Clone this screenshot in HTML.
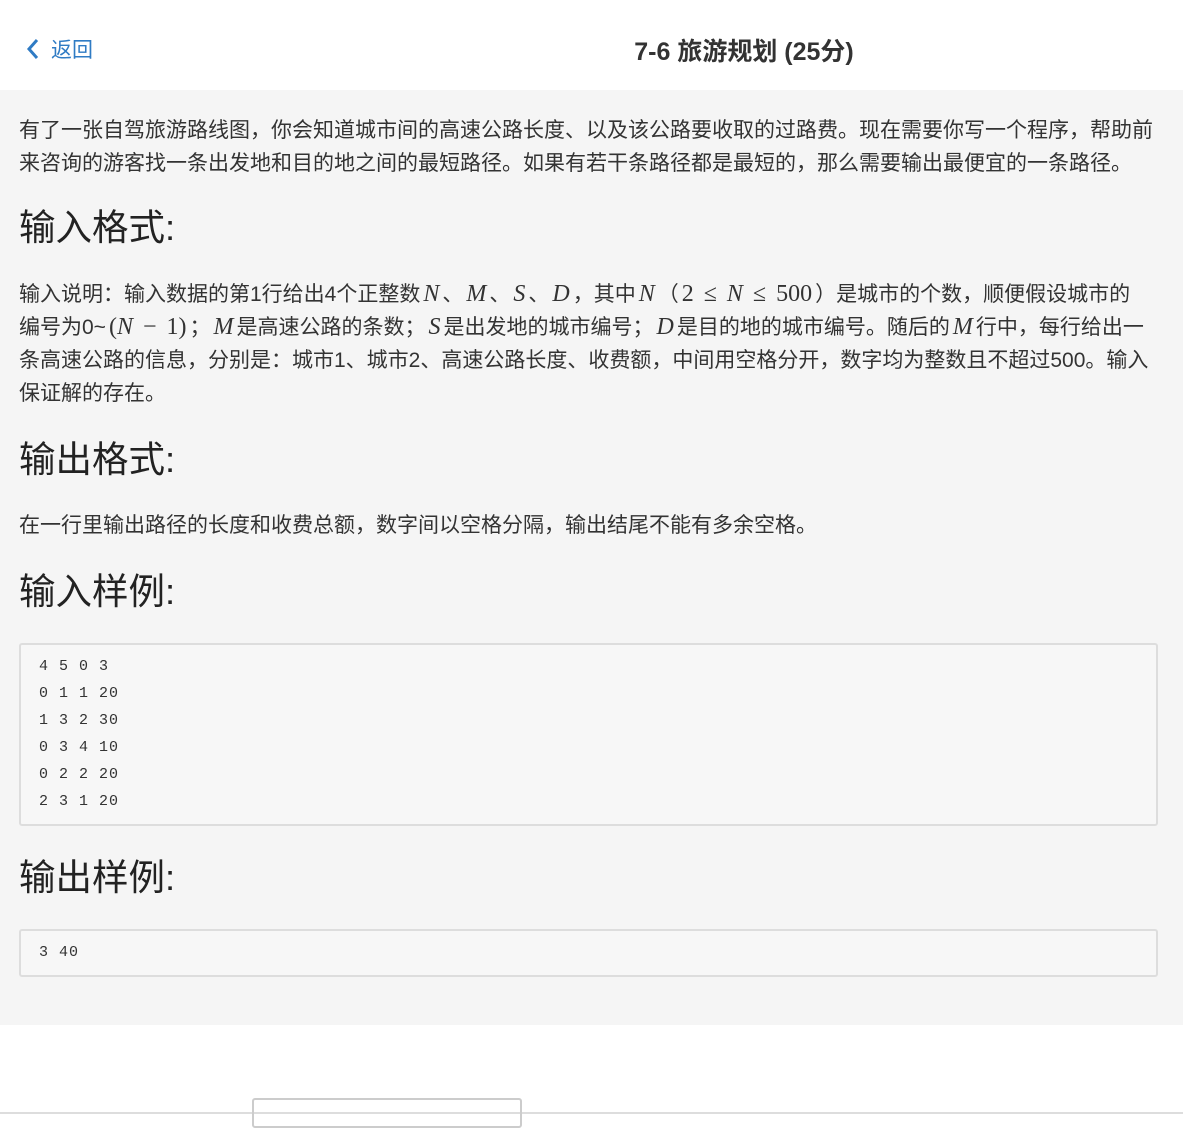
<!DOCTYPE html>
<html><head><meta charset="utf-8"><style>
*{margin:0;padding:0;box-sizing:border-box}
html,body{width:1183px;height:1118px;background:#fff;overflow:hidden;font-family:"Liberation Sans","Noto Sans CJK SC",sans-serif;color:#333}
.top{height:90px;position:relative;background:#fff}
.back{position:absolute;left:25px;top:34px;color:#2f7bc4;font-size:21px;display:flex;align-items:center}
.back svg{margin-right:10px}
.title{position:absolute;left:0;right:0;top:32px;text-align:center;padding-left:305px;font-size:25px;font-weight:bold;color:#333}
.main{position:absolute;top:90px;left:0;width:1183px;height:935px;background:#f5f5f5;padding:0 19px}
p{font-size:21px;line-height:33px;color:#333;white-space:nowrap}
h2{font-size:36.5px;font-weight:normal;color:#222;line-height:40px}
.m{font-family:"Liberation Serif",serif;font-size:24px;padding:0 3px}
.w{word-spacing:4px}
pre{font-family:"Liberation Mono",monospace;font-size:15px;letter-spacing:1px;line-height:27px;border:2px solid #ddd;border-radius:3px;background:#f7f7f7;padding:8px 18px;color:#333}
.bot{position:absolute;top:1098px;left:252px;width:270px;height:30px;border:2px solid #ccc;border-radius:3px}
.bl{position:absolute;top:1112px;left:0;width:1183px;height:2px;background:#ddd}
</style></head><body>
<div class="top">
<div class="back"><svg width="16" height="24" viewBox="0 0 16 24"><path d="M12 3 L4 12 L12 21" stroke="#2f7bc4" stroke-width="3" fill="none"/></svg>返回</div>
<div class="title">7-6 旅游规划 (25分)</div>
</div>
<div class="main">
<p style="position:absolute;top:24px;left:19px">有了一张自驾旅游路线图，你会知道城市间的高速公路长度、以及该公路要收取的过路费。现在需要你写一个程序，帮助前<br>来咨询的游客找一条出发地和目的地之间的最短路径。如果有若干条路径都是最短的，那么需要输出最便宜的一条路径。</p>
<h2 style="position:absolute;top:118px;left:19px">输入格式:</h2>
<p style="position:absolute;top:188px;left:19px">输入说明：输入数据的第1行给出4个正整数<i class="m">N</i>、<i class="m">M</i>、<i class="m">S</i>、<i class="m">D</i>，其中<i class="m">N</i>（<span class="m w">2 ≤ <i>N</i> ≤ 500</span>）是城市的个数，顺便假设城市的<br>编号为0~<span class="m w">(<i>N</i> − 1)</span>；<i class="m">M</i>是高速公路的条数；<i class="m">S</i>是出发地的城市编号；<i class="m">D</i>是目的地的城市编号。随后的<i class="m">M</i>行中，每行给出一<br>条高速公路的信息，分别是：城市1、城市2、高速公路长度、收费额，中间用空格分开，数字均为整数且不超过500。输入<br>保证解的存在。</p>
<h2 style="position:absolute;top:350px;left:19px">输出格式:</h2>
<p style="position:absolute;top:419px;left:19px">在一行里输出路径的长度和收费总额，数字间以空格分隔，输出结尾不能有多余空格。</p>
<h2 style="position:absolute;top:482px;left:19px">输入样例:</h2>
<pre style="position:absolute;top:553px;left:19px;width:1139px;height:183px">4 5 0 3
0 1 1 20
1 3 2 30
0 3 4 10
0 2 2 20
2 3 1 20</pre>
<h2 style="position:absolute;top:768px;left:19px">输出样例:</h2>
<pre style="position:absolute;top:839px;left:19px;width:1139px;height:48px">3 40</pre>
</div>
<div class="bl"></div>
<div class="bot"></div>
</body></html>
